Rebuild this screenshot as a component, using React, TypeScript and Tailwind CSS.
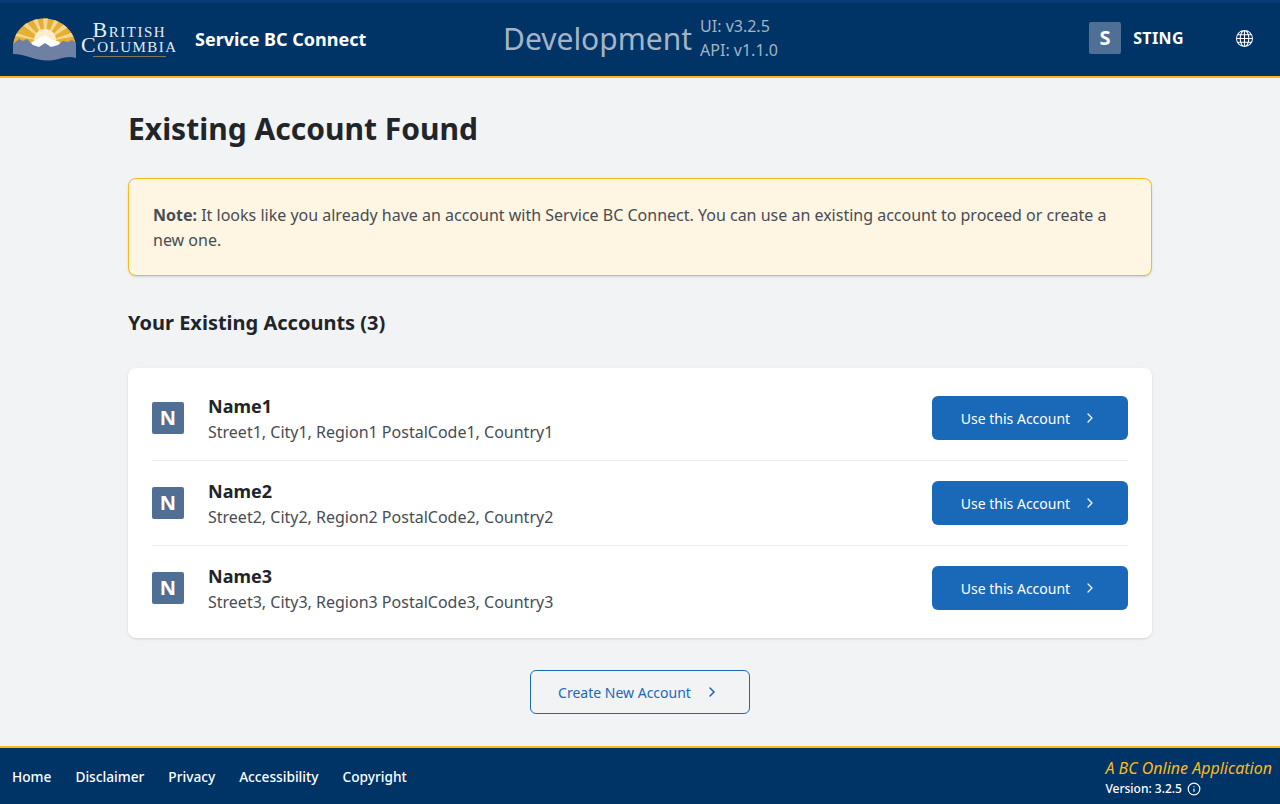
import React from "react";
import { ChevronRight, Info } from "lucide-react";
import { BsGlobe } from "react-icons/bs";

const accounts = [
  { name: "Name1", address: "Street1, City1, Region1 PostalCode1, Country1" },
  { name: "Name2", address: "Street2, City2, Region2 PostalCode2, Country2" },
  { name: "Name3", address: "Street3, City3, Region3 PostalCode3, Country3" },
];

const footerLinks = ["Home", "Disclaimer", "Privacy", "Accessibility", "Copyright"];

const BcLogo: React.FC = () => (
  <div className="flex items-center w-[163px] h-[46px] shrink-0">
    <svg width="66" height="44" viewBox="0 0 66 44" className="shrink-0">
      <defs>
        <clipPath id="dome">
          <path d="M1 27 C3 10 17 0.5 32 0.5 C47 0.5 61 10 64 27 L64 30 L1 30 Z" />
        </clipPath>
      </defs>
      <g clipPath="url(#dome)">
        <rect x="0" y="0" width="66" height="32" fill="#e6ae33" />
        <path d="M33 24 L8 5 L13 3 Z M33 24 L20 0 L25 0 Z M33 24 L31 0 L36 0 Z M33 24 L43 0 L48 1 Z M33 24 L54 4 L58 8 Z M33 24 L62 14 L64 18 Z M33 24 L1 14 L3 18 Z" fill="#f4d78e" />
        <circle cx="33" cy="22" r="11" fill="#fbeec8" />
      </g>
      <path d="M12 30 L20 24 L26 21 L33 17 L40 22 L46 23 L54 30 L33 34 Z" fill="#ffffff" />
      <path d="M1 26 L7 21 L11 23 L15 21 L21 27 L27 29 L33 25 L39 29 L46 27 L51 23 L56 24 L60 22 L64 25 L64 40 C54 37 48 42 38 42.5 C24 43.5 14 36 1 36 Z" fill="#6f80a5" />
    </svg>
    <div className="ml-[3px] flex flex-col items-center font-['Liberation_Serif',serif] text-[#e8ecf2] [font-variant-caps:small-caps]">
      <span className="text-[22px] h-[15px] leading-[15px] tracking-[1.5px]">British</span>
      <span className="text-[22px] h-[16px] leading-[16px] tracking-[1.5px]">Columbia</span>
      <span className="mt-[3px] h-[1px] w-[73px] bg-[#7f7a55]" />
    </div>
  </div>
);

export default function App() {
  return (
    <div className="min-h-[804px] flex flex-col bg-[#f2f3f5] font-['Noto_Sans',sans-serif]">
      <header className="h-[78px] shrink-0 flex items-center bg-[#003366] border-t-[3px] border-t-[#053c75] border-b-2 border-b-[#fcba19] pl-[12px] text-white">
        <BcLogo />
        <span className="ml-[20px] mb-[1px] w-[308px] text-[18px] font-bold">Service BC Connect</span>
        <span className="text-[30px] text-[#a4b3c6] leading-none mb-[2px]">Development</span>
        <div className="ml-[8px] mb-[3px] flex flex-col text-[16px] leading-[24px] text-[#a4b3c6]">
          <span>UI: v3.2.5</span>
          <span>API: v1.1.0</span>
        </div>
        <div className="ml-auto mb-[3px] flex items-center">
          <span className="w-[32px] h-[32px] rounded-[2px] bg-[#4f6f94] flex items-center justify-center text-[20px] font-bold">S</span>
          <span className="ml-[12px] text-[16px] font-bold tracking-[0.4px]">STING</span>
          <BsGlobe size={17} className="ml-[52px] mr-[27px]" />
        </div>
      </header>

      <main className="flex-1 w-[1024px] mx-auto pt-[30px]">
        <h1 className="text-[30px] leading-[42px] font-bold text-[#212529]">Existing Account Found</h1>

        <div className="mt-[28px] h-[98px] rounded-[8px] border border-[#fcba19] bg-[#fef5e3] shadow-sm px-[24px] py-[24px] text-[16px] leading-[25px] text-[#474d54]">
          <strong className="font-bold">Note:</strong> It looks like you already have an account with Service BC Connect. You can use an existing account to proceed or create a new one.
        </div>

        <h2 className="mt-[33px] text-[20px] leading-[28px] font-bold text-[#212529]">Your Existing Accounts (3)</h2>

        <section className="mt-[31px] h-[270px] rounded-[8px] bg-white shadow-sm px-[24px] pt-[8px]">
          {accounts.map((account, i) => (
            <div key={account.name} className={`h-[85px] flex items-center border-b ${i < 2 ? "border-[#e9ecef]" : "border-transparent"}`}>
              <span className="w-[32px] h-[32px] rounded-[2px] bg-[#4f6f94] flex items-center justify-center text-white text-[20px] font-bold">N</span>
              <div className="ml-[24px] pt-[2px] flex flex-col">
                <span className="text-[18px] leading-[26px] font-bold text-[#212529]">{account.name}</span>
                <span className="text-[16px] leading-[26px] text-[#474d54]">{account.address}</span>
              </div>
              <button className="ml-auto w-[196px] h-[44px] pr-[1px] rounded-[6px] bg-[#1a69b9] text-white text-[14px] flex items-center justify-center gap-[12px]">
                Use this Account
                <ChevronRight size={16} strokeWidth={1.8} />
              </button>
            </div>
          ))}
        </section>

        <div className="mt-[32px] flex justify-center">
          <button className="w-[220px] h-[44px] pr-[2px] rounded-[6px] border border-[#1a69b9] text-[#1a69b9] text-[14px] flex items-center justify-center gap-[13px]">
            Create New Account
            <ChevronRight size={16} strokeWidth={2.4} />
          </button>
        </div>
      </main>

      <footer className="mt-[32px] h-[58px] shrink-0 flex items-center justify-between bg-[#003366] border-t-2 border-t-[#fcba19] pl-[12px] pr-[8px]">
        <nav className="mt-[2px] flex gap-[24px] text-[13.7px] font-medium text-white">
          {footerLinks.map((link) => (
            <span key={link}>{link}</span>
          ))}
        </nav>
        <div className="mt-[2px] flex flex-col items-start">
          <span className="text-[16px] leading-[22px] italic text-[#fcba19]">A BC Online Application</span>
          <span className="mt-[1px] flex items-center gap-[5px] text-[12px] leading-[18px] font-medium text-white">
            Version: 3.2.5
            <Info size={14} strokeWidth={2} />
          </span>
        </div>
      </footer>
    </div>
  );
}
